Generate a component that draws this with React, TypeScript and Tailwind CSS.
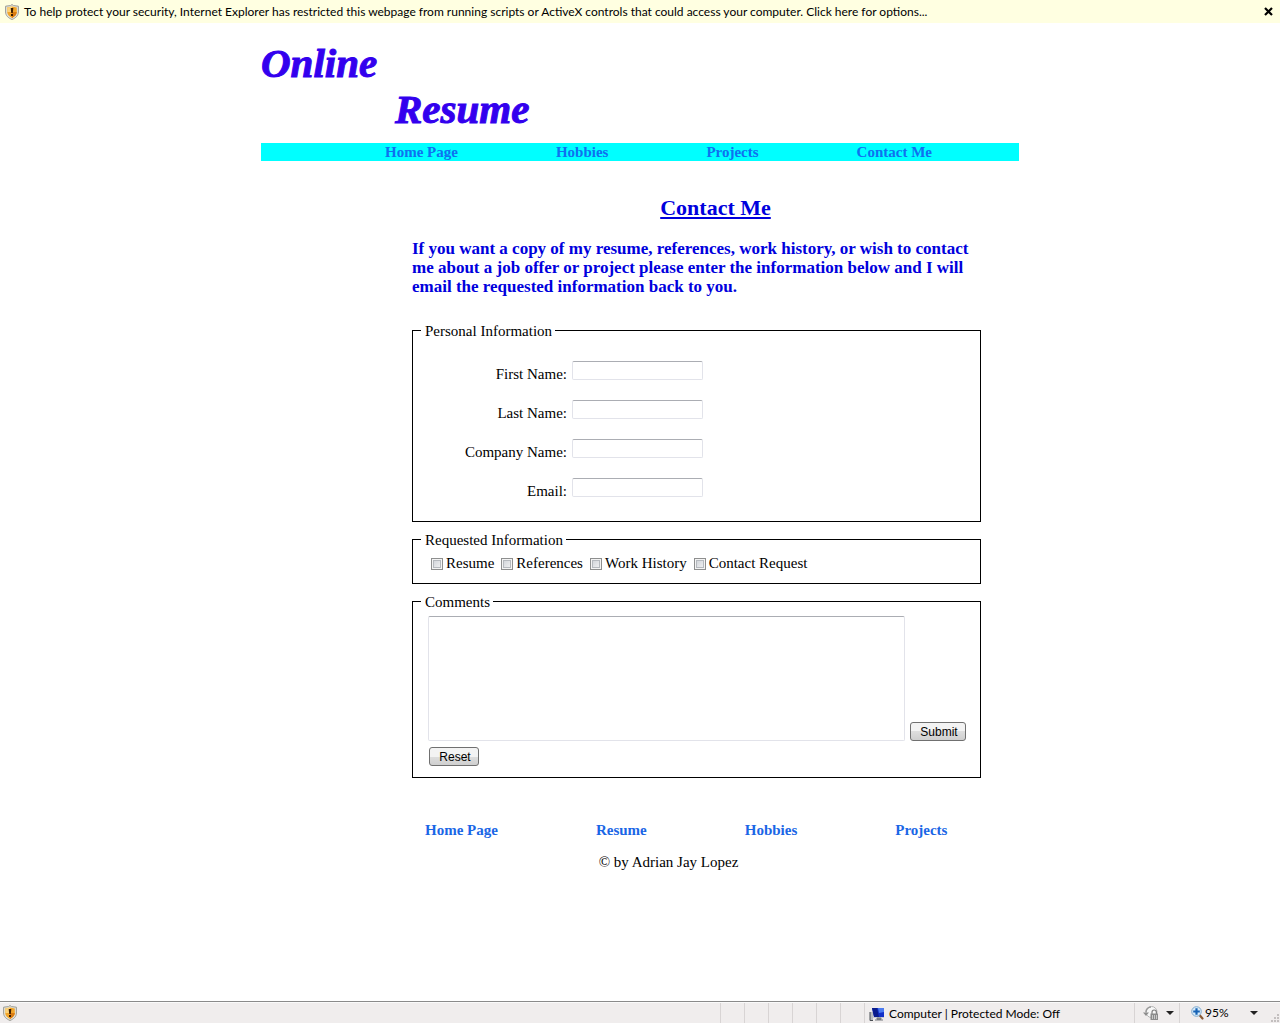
import React from "react";

function Shield() {
  return (
    <svg width="14" height="16" viewBox="0 0 14 16" aria-hidden="true" className="shrink-0">
      <path d="M7 .5 8.500 1.600 13.400 2.200V8c0 3.600-2.600 5.900-6.400 7.500C3.200 13.900.6 11.600.6 8V2.200L5.500 1.600Z" fill="#e4e4dc" stroke="#9a9b94" strokeWidth="1" />
      <path d="M7 2.400 11.800 3.400V8c0 2.700-2 4.500-4.800 5.900C4.200 12.500 2.200 10.700 2.200 8V3.400Z" fill="#f2a52a" />
      <path d="M7 2.400 2.200 3.400V8H7Z" fill="#fbd27c" />
      <path d="M7 8h4.800c0 2.700-2 4.500-4.800 5.900Z" fill="#d97b12" />
      <path d="M5.700 4h2.600L7.800 9H6.200ZM6 10h2v2H6Z" fill="#3a1c00" />
    </svg>
  );
}

function ComputerIcon() {
  return (
    <svg width="16" height="16" viewBox="0 0 16 16" aria-hidden="true" className="shrink-0">
      <path d="M1 6h3v8H1Z" fill="#b9bcc0" />
      <path d="M1 6v8.500M1 14.500h3" stroke="#4b4f55" strokeWidth="1" fill="none" />
      <path d="M3 2h12v9H5Z" fill="#1230c8" />
      <path d="M3 2h5l2 9H5Z" fill="#0a1c8c" />
      <path d="M9 2h6v4l-5 1Z" fill="#4c7bf0" />
      <path d="M4 11.500h11" stroke="#c8ccd2" />
      <path d="M8 12h4v1.500H8ZM6 14h8" stroke="#777b80" fill="#888" />
    </svg>
  );
}

function PrivacyIcon() {
  return (
    <svg width="16" height="16" viewBox="0 0 16 16" aria-hidden="true" className="shrink-0">
      <circle cx="8.500" cy="7" r="5.500" fill="#f7f7f7" stroke="#b4b4b4" />
      <path d="M0 7.500h6L3 11Z" fill="#8d8d8d" />
      <path d="M3 7a5 5 0 0 1 5-5" stroke="#9a9a9a" strokeWidth="1.500" fill="none" />
      <path d="M9 9V7.200a2.200 2.200 0 0 1 4.400 0V9" stroke="#808080" strokeWidth="1.200" fill="none" />
      <path d="M7.500 8.500h7.500V15H7.500Z" fill="#8c8c8c" />
      <path d="M9 10h1v4H9ZM11 10h1v4h-1ZM13 10h1v4h-1Z" fill="#c9c9c9" />
    </svg>
  );
}

function ZoomIcon() {
  return (
    <svg width="13" height="14" viewBox="0 0 13 14" aria-hidden="true" className="shrink-0">
      <path d="m8.500 9 3 3.500" stroke="#8a5a34" strokeWidth="2.200" strokeLinecap="round" />
      <circle cx="5.500" cy="5.500" r="4.800" fill="#d8ecfa" stroke="#7fa9cc" />
      <path d="M5.500 2.200v6.600M2.200 5.500h6.600" stroke="#1763b5" strokeWidth="2.200" />
    </svg>
  );
}

function Caret() {
  return (
    <svg width="8" height="4" viewBox="0 0 8 4" aria-hidden="true">
      <path d="M0 0h8L4 4Z" fill="#222" />
    </svg>
  );
}

function Grip() {
  return (
    <svg width="10" height="10" viewBox="0 0 10 10" aria-hidden="true" className="self-end">
      <path d="M7 1h2v2H7ZM4 4h2v2H4ZM7 4h2v2H7ZM1 7h2v2H1ZM4 7h2v2H4ZM7 7h2v2H7Z" fill="#c3bfbf" />
    </svg>
  );
}

const fields = [
  { id: "first", label: "First Name:" },
  { id: "last", label: "Last Name:" },
  { id: "company", label: "Company Name:" },
  { id: "email", label: "Email:" },
];

const requests = ["Resume", "References", "Work History", "Contact Request"];
const topLinks = ["Home Page", "Hobbies", "Projects", "Contact Me"];
const bottomLinks = ["Home Page", "Resume", "Hobbies", "Projects"];

const legendClass = "ml-2 pt-[3px] pl-1 pr-[3px] leading-[17px]";
const buttonClass =
  "h-[19px] rounded-[3px] border border-[#707070] bg-linear-to-b from-[#f3f3f3] from-50% via-[#dedede] via-50% to-[#cfcfcf] pt-px pl-[2px] text-center font-['Liberation_Sans',Arial,sans-serif] text-[12px] leading-[16px] text-black";

export default function App() {
  return (
    <div className="flex min-h-screen flex-col bg-white pb-px font-['Liberation_Serif','Times_New_Roman',serif] text-[15px] text-black">
      <div className="flex min-h-[23px] items-center bg-[#ffffe1] pr-[7px] pl-[5px] font-[Lato,'Segoe_UI',sans-serif] text-[12px]">
        <Shield />
        <button type="button" className="ml-[5px] flex-1 text-left leading-[22px]">
          To help protect your security, Internet Explorer has restricted this webpage from running scripts or ActiveX controls that could access your computer. Click here for options...
        </button>
        <button type="button" aria-label="Close">
          <svg width="9" height="9" viewBox="0 0 9 9" aria-hidden="true">
            <path d="m1 1 7 7M8 1 1 8" stroke="#000" strokeWidth="2.200" />
          </svg>
        </button>
      </div>

      <div className="mx-auto w-full max-w-[758px] flex-1">
        <header>
          <h1 className="pt-[17px] text-[41px] leading-[46px] font-bold text-[#3300ee] italic [-webkit-text-stroke:1px_#3300ee]">
            <span className="block">Online</span>
            <span className="block pl-[134px]">Resume</span>
          </h1>
          <nav className="mt-[11px] flex min-h-[18px] items-center gap-[98px] bg-[#00ffff] pl-[124px] leading-[18px] font-bold">
            {topLinks.map((t) => (
              <a key={t} href="#" className="whitespace-nowrap text-[#0f70f0]">{t}</a>
            ))}
          </nav>
        </header>

        <main className="pl-[151px]">
          <h2 className="pt-[34px] text-center text-[22px] leading-[26px] font-bold text-[#0000dd]">
            <a href="#" className="underline decoration-2 underline-offset-2">Contact Me</a>
          </h2>
          <p className="mt-[18px] mr-[38px] text-[17px] leading-[19px] font-bold text-[#0000dd]">
            If you want a copy of my resume, references, work history, or wish to contact me about a job offer or project please enter the information below and I will email the requested information back to you.
          </p>

          <form className="mt-[24px] mr-[38px] flex flex-col gap-[7px]" onSubmit={(e) => e.preventDefault()}>
            <fieldset className="border border-black pt-[21px] pb-6">
              <legend className={legendClass}>Personal Information</legend>
              <div className="flex flex-col gap-5">
                {fields.map((f) => (
                  <div key={f.id} className="flex h-[19px] gap-[5px]">
                    <label htmlFor={f.id} className="w-[154px] pt-1 text-right leading-[19px]">{f.label}</label>
                    <input id={f.id} type="text" className="w-[131px] rounded-[2px] border border-[#e2e3ea] border-t-[#abadb3] px-1 text-[13px]" />
                  </div>
                ))}
              </div>
            </fieldset>

            <fieldset className="border border-black pt-[5px] pb-[10px]">
              <legend className={legendClass}>Requested Information</legend>
              <div className="flex flex-wrap gap-x-[7px] pl-[18px]">
                {requests.map((r) => (
                  <label key={r} className="flex items-center gap-[3px] leading-[19px]">
                    <input
                      type="checkbox"
                      className="size-[12px] appearance-none border border-[#8e8f8f] bg-linear-to-br from-[#cbcfd5] to-[#f6f6f6] shadow-[inset_0_0_0_1px_#f4f4f4,inset_0_0_0_2px_#b5b9be] checked:bg-[#4b6fa8]"
                    />
                    {r}
                  </label>
                ))}
              </div>
            </fieldset>

            <fieldset className="border border-black pt-[5px] pr-[13px] pb-[11px] pl-[15px]">
              <legend className="-ml-[7px] pt-[3px] pr-[3px] pl-1 leading-[17px]">Comments</legend>
              <div className="flex flex-wrap items-end gap-x-[5px] gap-y-[6px]">
                <textarea aria-label="Comments" className="h-[125px] w-[477px] resize-none rounded-[2px] border border-[#e2e3ea] border-t-[#abadb3] p-1 text-[13px]" />
                <button type="submit" className={`${buttonClass} w-[56px]`}>Submit</button>
                <button type="reset" className={`${buttonClass} ml-px w-[50px]`}>Reset</button>
              </div>
            </fieldset>
          </form>
        </main>

        <footer className="pt-[43px] pl-[164px]">
          <nav className="flex gap-[98px] leading-[19px] font-bold">
            {bottomLinks.map((t) => (
              <a key={t} href="#" className="whitespace-nowrap text-[#1a66e6]">{t}</a>
            ))}
          </nav>
          <p className="mt-[13px] mr-[107px] text-center leading-[19px]">© by Adrian Jay Lopez</p>
        </footer>
      </div>

      <div className="flex h-[22px] items-stretch justify-end border-t border-[#8a8a8a] bg-[#f0eded] font-[Lato,'Segoe_UI',sans-serif] text-[12px] shadow-[inset_0_1px_0_#fafafa]">
        <div className="flex flex-1 items-center pl-[3px]"><Shield /></div>
        {[0, 1, 2, 3, 4, 5].map((n) => (
          <div key={n} className="mt-px w-6 border-l border-[#d8d4d4]" />
        ))}
        <div className="mt-px flex w-[270px] items-center gap-[4px] border-l border-[#d8d4d4] pt-px pl-[4px]">
          <ComputerIcon />
          <span>Computer | Protected Mode: Off</span>
        </div>
        <button type="button" aria-label="Privacy report" className="mt-px flex w-[45px] items-center gap-[7px] border-l border-[#d8d4d4] pl-[8px]">
          <PrivacyIcon />
          <Caret />
        </button>
        <button type="button" aria-label="Zoom level" className="mt-px flex w-[91px] items-center border-l border-[#d8d4d4] pl-[11px]">
          <ZoomIcon />
          <span className="ml-px w-[45px] text-left">95%</span>
          <Caret />
        </button>
        <Grip />
      </div>
    </div>
  );
}
